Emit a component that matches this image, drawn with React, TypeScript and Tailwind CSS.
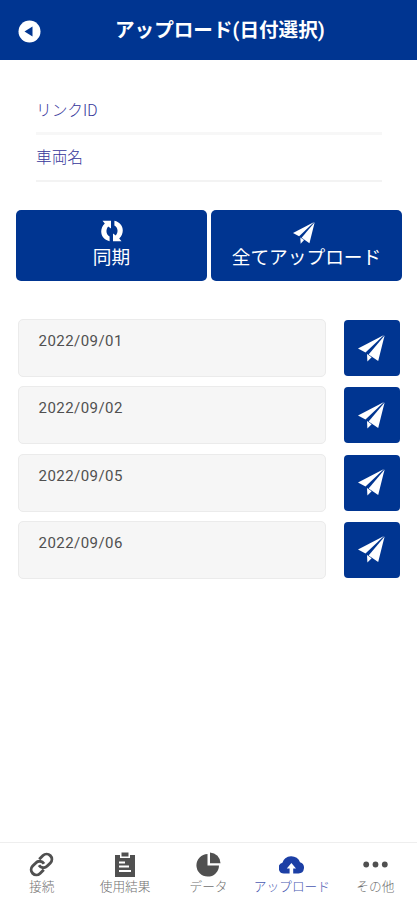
type TabProps = {
  label: string;
  active?: boolean;
  children: React.ReactNode;
};

const dates = ["2022/09/01", "2022/09/02", "2022/09/05", "2022/09/06"];

function PlaneIcon({ className }: { className: string }) {
  return (
    <svg viewBox="0 0 27 27" className={className} fill="currentColor">
      <path d="M0 13.5 26 0 7.5 17.6Z" />
      <path d="M26.6 .4 20.2 26 10.6 19.4Z" />
      <path d="M9 19 13.6 22.2 9.4 26.6Z" />
    </svg>
  );
}

function SyncIcon() {
  return (
    <svg viewBox="0 0 22 22" className="h-[22px] w-[22px]" fill="currentColor">
      <path d="M1.5 .8H10V8.6L7.2 6.6C4.6 9.5 4.8 14.6 8.6 16.6V21.2C-.4 19.2-2.4 9.6 3.8 3.6Z" />
      <path d="M20.5 21.2H12V13.4L14.8 15.4C17.4 12.5 17.2 7.4 13.4 5.4V.8C22.4 2.8 24.4 12.4 18.2 18.4Z" />
    </svg>
  );
}

function Tab({ label, active, children }: TabProps) {
  return (
    <div
      className={`flex flex-1 flex-col items-center pt-[8px] ${active ? "text-[#1c3fa5]" : "text-[#505050]"}`}
    >
      <div className="flex h-[27px] items-center justify-center">{children}</div>
      <span
        className={`mt-px whitespace-nowrap text-[12.7px] leading-[16px] font-light ${active ? "text-[#4a5ab2]" : "text-[#707070]"}`}
      >
        {label}
      </span>
    </div>
  );
}

export default function App() {
  return (
    <div className="flex h-[900px] w-[417px] flex-col bg-white font-['Roboto','Noto_Sans_CJK_JP',sans-serif]">
      <header className="flex h-[60px] items-center bg-[#003591] pl-[18px] text-white">
        <svg viewBox="0 0 23 23" className="mt-[2px] h-[23px] w-[23px]">
          <circle cx="11.5" cy="11.5" r="11" fill="#fff" />
          <path d="M6.5 11.5 14.5 6.5V16.5Z" fill="#003591" />
        </svg>
        <h1 className="mt-[2px] ml-[74px] whitespace-nowrap text-[19.6px] leading-[24px] font-bold">
          アップロード(日付選択)
        </h1>
      </header>

      <section className="mt-[27px] pr-[35px] pl-[36px] text-[15.7px] font-light text-[#35359a]">
        <div className="flex h-[48px] items-center border-b-[3px] border-[#f7f7f7] pt-[3px]">
          リンクID
        </div>
        <div className="flex h-[47px] items-center border-b-2 border-[#f3f3f3]">
          車両名
        </div>
      </section>

      <div className="mt-[28px] flex gap-[4px] pl-[16px] text-[18.7px] leading-[24px] text-white">
        <button className="flex h-[71px] w-[191px] flex-col items-center rounded-[5px] bg-[#003591] pt-[10px]">
          <SyncIcon />
          <span className="mt-[4px]">同期</span>
        </button>
        <button className="flex h-[71px] w-[191px] flex-col items-center rounded-[5px] bg-[#003591] pt-[12px]">
          <PlaneIcon className="mr-[5px] h-[22px] w-[22px]" />
          <span className="mt-[2px]">全てアップロード</span>
        </button>
      </div>

      <ul className="mt-[38px] flex flex-col gap-[9.3px] pl-[18px]">
        {dates.map((date) => (
          <li key={date} className="flex items-center gap-[18px]">
            <div className="h-[58px] w-[308px] rounded-[5px] border border-[#ebebeb] bg-[#f6f6f6] pt-[11px] pl-[19.5px] text-[15px] leading-[20px] tracking-[0.45px] text-[#505050]">
              {date}
            </div>
            <button className="flex h-[56px] w-[56px] items-center justify-center rounded-[4px] bg-[#003591] text-white">
              <PlaneIcon className="mr-[2px] h-[27px] w-[27px]" />
            </button>
          </li>
        ))}
      </ul>

      <nav className="mt-auto flex h-[58px] border-t border-[#eee]">
        <Tab label="接続">
          <svg
            viewBox="0 0 24 24"
            className="h-[25px] w-[25px]"
            fill="none"
            stroke="currentColor"
            strokeWidth="2.8"
          >
            <path d="M9.6 12.8a5 5 0 0 0 7.9.7l3-3a5 5 0 0 0-7.07-7.07l-3.6 3.6" />
            <path d="M14.4 11.2a5 5 0 0 0-7.9-.7l-3 3a5 5 0 0 0 7.07 7.07l3.6-3.6" />
          </svg>
        </Tab>
        <Tab label="使用結果">
          <svg viewBox="0 0 22 25" className="h-[25px] w-[22px]" fill="currentColor">
            <path d="M1 3H6V6H16V3H21V25H1Z" />
            <path d="M7.5 .5H14.5V4.5H7.5Z" />
            <path
              d="M5 10.5H11M5 14.5H15M5 19H17"
              stroke="#fff"
              strokeWidth="1.8"
            />
          </svg>
        </Tab>
        <Tab label="データ">
          <svg viewBox="0 0 25 25" className="h-[25px] w-[25px]" fill="currentColor">
            <path d="M11.5 2V13.5H23A11.3 11.3 0 1 1 11.5 2Z" />
            <path d="M14 0.5A10.8 10.8 0 0 1 24.5 11.3H14Z" />
          </svg>
        </Tab>
        <Tab label="アップロード" active>
          <svg viewBox="0 0 25 18" className="h-[18px] w-[25px]" fill="currentColor">
            <path d="M5.5 17.5A5.5 5.5 0 0 1 3.4 6.8 9 8 0 0 1 21 6.2 5.8 5.8 0 0 1 19.5 17.5H14.2V12.5H17L12.4 7 7.8 12.5H10.6V17.5Z" />
          </svg>
        </Tab>
        <Tab label="その他">
          <svg viewBox="0 0 25 7" className="h-[7px] w-[25px]" fill="currentColor">
            <circle cx="3.2" cy="3.5" r="2.9" />
            <circle cx="12.5" cy="3.5" r="2.9" />
            <circle cx="21.8" cy="3.5" r="2.9" />
          </svg>
        </Tab>
      </nav>
    </div>
  );
}
